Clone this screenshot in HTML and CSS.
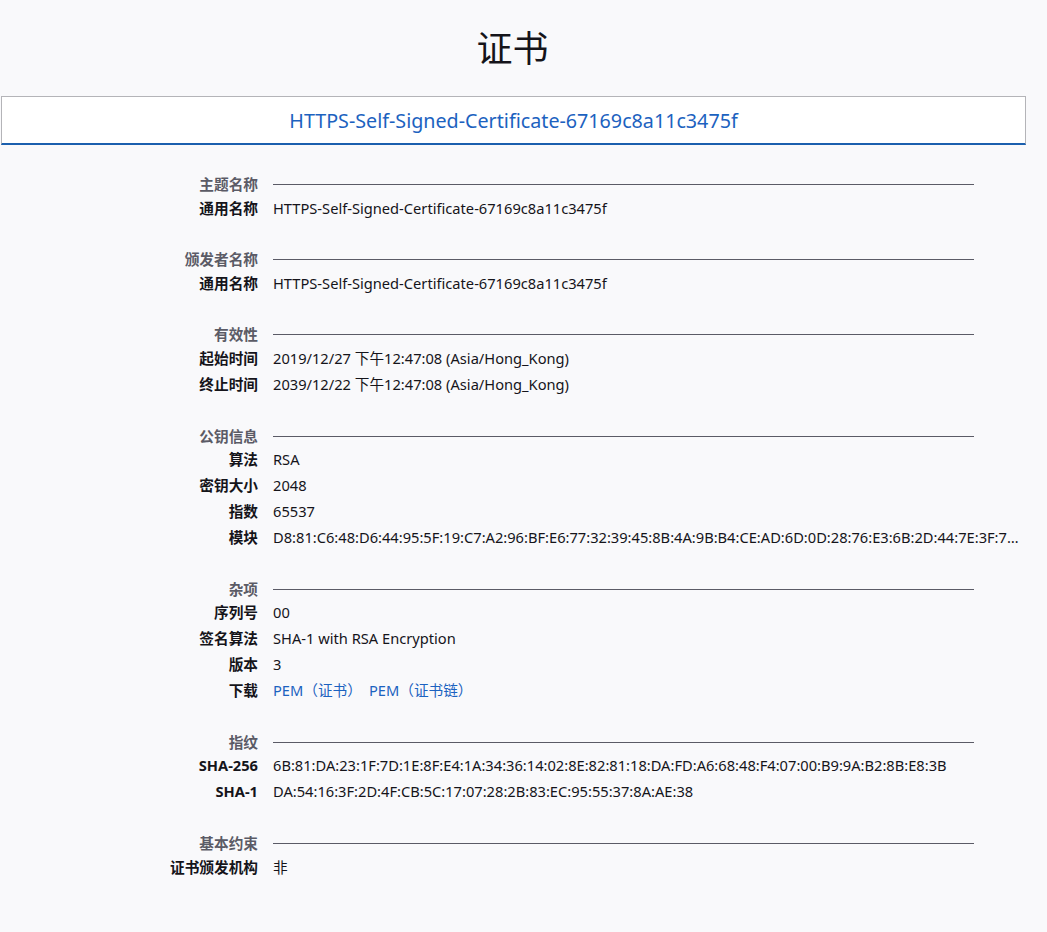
FILE: index.html
```html
<!DOCTYPE html>
<html lang="zh-CN">
<head>
<meta charset="utf-8">
<title>证书</title>
<link rel="stylesheet" href="styles.css">
</head>
<body>
<h1 class="title">证书</h1>
<div class="tabbar">
  <div class="tab">HTTPS-Self-Signed-Certificate-67169c8a11c3475f</div>
</div>
<div class="info">
  <section class="group">
    <div class="group-label">主题名称</div><div class="rule"></div>
    <div class="label">通用名称</div><div class="value">HTTPS-Self-Signed-Certificate-67169c8a11c3475f</div>
  </section>
  <section class="group">
    <div class="group-label">颁发者名称</div><div class="rule"></div>
    <div class="label">通用名称</div><div class="value">HTTPS-Self-Signed-Certificate-67169c8a11c3475f</div>
  </section>
  <section class="group">
    <div class="group-label">有效性</div><div class="rule"></div>
    <div class="label">起始时间</div><div class="value">2019/12/27 下午12:47:08 (Asia/Hong_Kong)</div>
    <div class="label">终止时间</div><div class="value">2039/12/22 下午12:47:08 (Asia/Hong_Kong)</div>
  </section>
  <section class="group">
    <div class="group-label">公钥信息</div><div class="rule"></div>
    <div class="label">算法</div><div class="value">RSA</div>
    <div class="label">密钥大小</div><div class="value">2048</div>
    <div class="label">指数</div><div class="value">65537</div>
    <div class="label">模块</div><div class="value clip">D8:81:C6:48:D6:44:95:5F:19:C7:A2:96:BF:E6:77:32:39:45:8B:4A:9B:B4:CE:AD:6D:0D:28:76:E3:6B:2D:44:7E:3F:7…</div>
  </section>
  <section class="group">
    <div class="group-label">杂项</div><div class="rule"></div>
    <div class="label">序列号</div><div class="value">00</div>
    <div class="label">签名算法</div><div class="value">SHA-1 with RSA Encryption</div>
    <div class="label">版本</div><div class="value">3</div>
    <div class="label">下载</div><div class="value links"><a class="link" href="#">PEM（证书）</a><a class="link" href="#">PEM（证书链）</a></div>
  </section>
  <section class="group">
    <div class="group-label">指纹</div><div class="rule"></div>
    <div class="label">SHA-256</div><div class="value">6B:81:DA:23:1F:7D:1E:8F:E4:1A:34:36:14:02:8E:82:81:18:DA:FD:A6:68:48:F4:07:00:B9:9A:B2:8B:E8:3B</div>
    <div class="label">SHA-1</div><div class="value">DA:54:16:3F:2D:4F:CB:5C:17:07:28:2B:83:EC:95:55:37:8A:AE:38</div>
  </section>
  <section class="group">
    <div class="group-label">基本约束</div><div class="rule"></div>
    <div class="label">证书颁发机构</div><div class="value">非</div>
  </section>
</div>
</body>
</html>
```
FILE: styles.css
```css
html, body {
  margin: 0;
  padding: 0;
  background: #f9f9fb;
}
body {
  font-family: "Noto Sans", "Noto Sans CJK SC", sans-serif;
  font-size: 14.67px;
  color: #15141a;
}
.title {
  margin: 24px 22px 28px 0;
  font-size: 36px;
  line-height: 44px;
  font-weight: 400;
  text-align: center;
  font-family: "Noto Sans CJK SC", "Noto Sans", sans-serif;
}
.tabbar {
  width: 1023px;
  margin-left: 2px;
}
.tab {
  height: 46px;
  background: #ffffff;
  border: 1px solid #b4b4b8;
  border-bottom: 2px solid #1b5fae;
  display: flex;
  align-items: center;
  justify-content: center;
  font-size: 19.7px;
  color: #1c62c0;
  margin-left: -1px;
  margin-right: -1px;
}
.info {
  width: 1025px;
  margin-top: 28.5px;
}
.group {
  display: grid;
  grid-template-columns: 258px minmax(0, 1fr);
  column-gap: 15px;
  grid-template-rows: 21px;
  grid-auto-rows: 26px;
  align-items: center;
  line-height: 20px;
  margin-bottom: 28.2px;
}
.group-label {
  text-align: right;
  color: #5b5b66;
  font-weight: 600;
}
.rule {
  height: 0;
  border-top: 1px solid #5b5b66;
  margin-right: 51px;
  margin-top: 1px;
}
.label {
  text-align: right;
  font-weight: 700;
}
.value {
  white-space: nowrap;
}
.clip {
  overflow: hidden;
}
.links {
  display: flex;
  gap: 7px;
}
.link {
  color: #1c62c0;
  text-decoration: none;
}
```
